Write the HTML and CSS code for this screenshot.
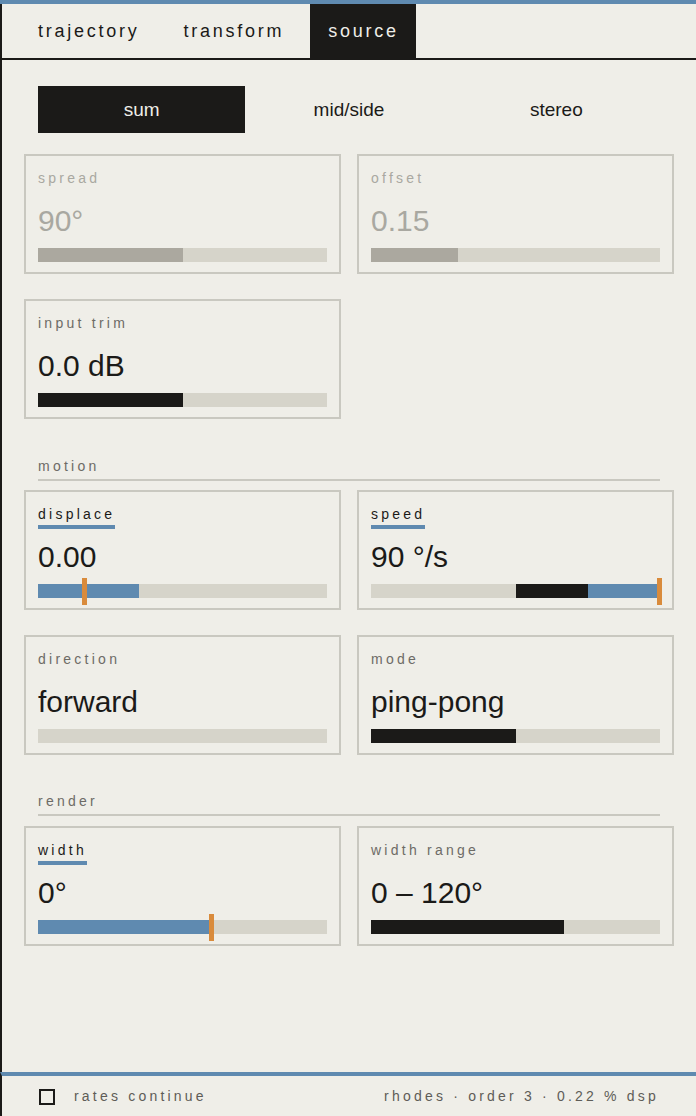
FILE: index.html
```html
<!DOCTYPE html>
<html lang="en">
<head>
<meta charset="utf-8">
<title>source</title>
<link rel="stylesheet" href="styles.css">
</head>
<body>
<div class="app">
  <div class="topbar"></div>
  <div class="shell">
    <nav class="tabs">
      <div class="tab">trajectory</div>
      <div class="tab">transform</div>
      <div class="tab active">source</div>
    </nav>
    <main class="content">
      <div class="segmented">
        <div class="seg-btn active">sum</div>
        <div class="seg-btn">mid/side</div>
        <div class="seg-btn">stereo</div>
      </div>

      <div class="grid first">
        <div class="card disabled">
          <div class="label">spread</div>
          <div class="value">90°</div>
          <div class="bar"><span class="fill muted" style="width:50%"></span></div>
        </div>
        <div class="card disabled">
          <div class="label">offset</div>
          <div class="value">0.15</div>
          <div class="bar"><span class="fill muted" style="width:30%"></span></div>
        </div>
        <div class="card">
          <div class="label">input trim</div>
          <div class="value">0.0 dB</div>
          <div class="bar"><span class="fill dark" style="width:50%"></span></div>
        </div>
      </div>

      <div class="section-head">motion</div>
      <div class="grid">
        <div class="card">
          <div class="label"><span class="mod">displace</span></div>
          <div class="value">0.00</div>
          <div class="bar"><span class="fill blue" style="width:35%"></span><span class="marker" style="left:calc(16% - 2px)"></span></div>
        </div>
        <div class="card">
          <div class="label"><span class="mod">speed</span></div>
          <div class="value">90 °/s</div>
          <div class="bar"><span class="fill" style="width:50%"></span><span class="fill dark" style="width:25%"></span><span class="fill blue" style="width:25%"></span><span class="marker" style="left:calc(100% - 3px)"></span></div>
        </div>
        <div class="card">
          <div class="label">direction</div>
          <div class="value">forward</div>
          <div class="bar"></div>
        </div>
        <div class="card">
          <div class="label">mode</div>
          <div class="value">ping-pong</div>
          <div class="bar"><span class="fill dark" style="width:50%"></span></div>
        </div>
      </div>

      <div class="section-head second">render</div>
      <div class="grid">
        <div class="card">
          <div class="label"><span class="mod">width</span></div>
          <div class="value">0°</div>
          <div class="bar"><span class="fill blue" style="width:59%"></span><span class="marker" style="left:calc(60% - 2px)"></span></div>
        </div>
        <div class="card">
          <div class="label">width range</div>
          <div class="value">0 – 120°</div>
          <div class="bar"><span class="fill dark" style="width:66.7%"></span></div>
        </div>
      </div>
    </main>
    <footer class="footer">
      <div class="footer-left">
        <span class="checkbox"></span>
        <span class="footer-text">rates continue</span>
      </div>
      <div class="footer-text">rhodes · order 3 · 0.22 % dsp</div>
    </footer>
  </div>
</div>
</body>
</html>
```

FILE: styles.css
```css
* { box-sizing: border-box; }

html, body {
  margin: 0;
  padding: 0;
  background: #efeee8;
}

body {
  font-family: "Liberation Sans", Arial, Helvetica, sans-serif;
  color: #1b1a18;
}

.app {
  height: 1116px;
  display: flex;
  flex-direction: column;
  overflow: hidden;
}

.topbar {
  height: 4px;
  background: #5f8ab0;
  flex: none;
}

.shell {
  flex: 1;
  display: flex;
  flex-direction: column;
  border-left: 2px solid #1b1a18;
}

/* tabs */
.tabs {
  display: flex;
  gap: 9px;
  height: 56px;
  padding-left: 18px;
  border-bottom: 2px solid #1b1a18;
  flex: none;
}

.tab {
  display: flex;
  align-items: center;
  padding: 0 17px 0 18px;
  font-size: 18px;
  letter-spacing: 2.75px;
  color: #1b1a18;
}

.tab.active {
  background: #1b1a18;
  color: #efeee8;
}

/* content */
.content {
  flex: 1;
  display: flex;
  flex-direction: column;
  padding: 26px 22px 0;
}

.segmented {
  display: grid;
  grid-template-columns: 1fr 1fr 1fr;
  height: 47px;
  margin: 0 14px 0 14px;
}

.seg-btn {
  display: flex;
  align-items: center;
  justify-content: center;
  font-size: 19px;
  color: #1b1a18;
}

.seg-btn.active {
  background: #1b1a18;
  color: #efeee8;
}

.grid {
  display: grid;
  grid-template-columns: 1fr 1fr;
  column-gap: 16px;
  row-gap: 25px;
}

.grid.first {
  margin-top: 21px;
}

.card {
  border: 2px solid #c9c8c0;
  padding: 14px 12px 10px;
}

.label {
  height: 16px;
  font-size: 14px;
  line-height: 16px;
  letter-spacing: 3.25px;
  color: #6d6b66;
  white-space: nowrap;
}

.label .mod {
  display: inline-block;
  color: #1b1a18;
  padding-bottom: 3px;
  border-bottom: 4px solid #5f8ab0;
}

.value {
  margin-top: 18px;
  font-size: 30px;
  line-height: 34px;
  color: #1b1a18;
  white-space: nowrap;
}

.bar {
  position: relative;
  display: flex;
  margin-top: 10px;
  height: 14px;
  background: #d6d4ca;
}

.fill {
  display: block;
  height: 100%;
}

.fill.muted { background: #aba89f; }
.fill.dark { background: #1b1a18; }
.fill.blue { background: #5f8ab0; }

.marker {
  position: absolute;
  top: -6px;
  bottom: -7px;
  width: 5px;
  background: #d98b3c;
}

.card.disabled .label,
.card.disabled .value {
  color: #a9a8a1;
}

.section-head {
  margin: 39px 14px 9px;
  padding-bottom: 5px;
  border-bottom: 2px solid #c9c8c0;
  font-size: 14px;
  line-height: 16px;
  letter-spacing: 3.25px;
  color: #6d6b66;
}

.section-head.second {
  margin-top: 38px;
  margin-bottom: 10px;
}

/* footer */
.footer {
  flex: none;
  height: 44px;
  border-top: 4px solid #5f8ab0;
  margin-left: -2px;
  border-left: 2px solid #1b1a18;
  display: flex;
  align-items: center;
  justify-content: space-between;
  padding: 0 37px 0 37px;
}

.footer-left {
  display: flex;
  align-items: center;
}

.checkbox {
  width: 16px;
  height: 16px;
  border: 2px solid #1b1a18;
  margin-right: 19px;
  margin-top: 1px;
}

.footer-text {
  font-size: 14px;
  letter-spacing: 3.2px;
  color: #5e5c57;
  white-space: nowrap;
}
```
